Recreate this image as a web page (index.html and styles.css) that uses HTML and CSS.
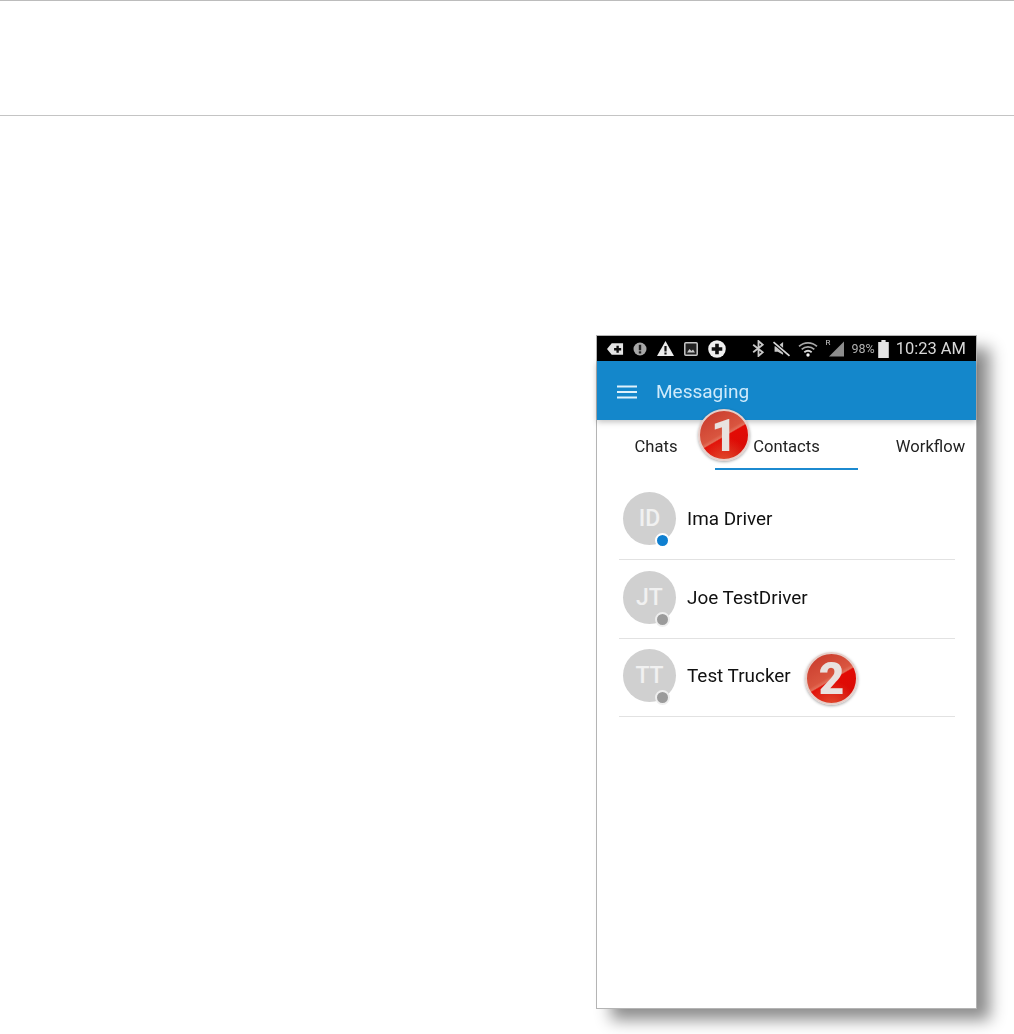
FILE: index.html
```html
<!DOCTYPE html>
<html lang="en">
<head>
<meta charset="utf-8">
<title>Messaging contacts</title>
<link rel="stylesheet" href="styles.css">
</head>
<body>
<header class="doc-header"></header>
<main class="doc-body">
  <section class="phone">
    <div class="status">
      <div class="status-left">
        <svg class="ic ic-first" width="17" height="14" viewBox="0 0 18 14"><path fill="#e4e4e4" d="M5 1h12v12H5L0 7z"/><path fill="#111" d="M10 3.500h2.500V6H15v2.500h-2.500V11H10V8.500H7.500V6H10z"/></svg>
        <svg class="ic" width="14" height="14" viewBox="0 0 14 14"><circle cx="7" cy="7" r="6.500" fill="#a8a8a8"/><rect x="5.800" y="2.800" width="2.400" height="5.500" fill="#222"/><rect x="5.800" y="9.300" width="2.400" height="2.200" fill="#222"/></svg>
        <svg class="ic" width="17" height="15" viewBox="0 0 17 15"><path fill="#ececec" d="M8.500 0L17 15H0z"/><rect x="7.400" y="5" width="2.200" height="5.500" fill="#111"/><rect x="7.400" y="11.500" width="2.200" height="2" fill="#111"/></svg>
        <svg class="ic" width="14" height="14" viewBox="0 0 14 14"><rect x=".8" y=".8" width="12.400" height="12.400" rx="1" fill="#222" stroke="#c8c8c8" stroke-width="1.500"/><path fill="#c8c8c8" d="M3 10.500l2.500-3.500 2 2 1.500-1.500 2 3z"/></svg>
        <svg class="ic" width="18" height="18" viewBox="0 0 17 17"><circle cx="8.500" cy="8.500" r="8.300" fill="#f0f0f0"/><path fill="#111" d="M6.800 3.500h3.400v3.300h3.300v3.400h-3.300v3.300H6.800v-3.300H3.500V6.800h3.300z"/></svg>
      </div>
      <div class="status-right">
        <svg class="ic" width="13" height="17" viewBox="0 0 12 16"><path fill="none" stroke="#c8c8c8" stroke-width="1.700" d="M1 4.500l9 7-4 3.500V1l4 3.500-9 7"/></svg>
        <svg class="ic" width="19" height="16" viewBox="0 0 17 15"><path fill="#c8c8c8" d="M2 5h3l5-4v12L5 10H2z"/><path stroke="#000" stroke-width="3.500" d="M1 1l15 13"/><path stroke="#d8d8d8" stroke-width="1.600" d="M1 1l15 13"/></svg>
        <svg class="ic" width="20" height="16" viewBox="0 0 19 15"><path fill="none" stroke="#a8a8a8" stroke-width="1.700" d="M1 5c5-4.500 12-4.500 17 0M3.500 7.800c3.500-3 8.500-3 12 0"/><path fill="none" stroke="#d4d4d4" stroke-width="1.800" d="M6 10.500c2-1.500 5-1.500 7 0"/><circle cx="9.500" cy="13.200" r="1.600" fill="#f4f4f4"/></svg>
        <span class="roam"><small class="roam-r">R</small><svg width="15" height="16" viewBox="0 0 15 15"><path fill="#8c8c8c" d="M15 0v15H0z"/></svg></span>
        <span class="pct">98%</span>
        <svg class="ic" width="11" height="18" viewBox="0 0 10 17"><path fill="#e4e4e4" d="M3 0h4v2h3v15H0V2h3z"/></svg>
        <span class="clock">10:23 AM</span>
      </div>
    </div>
    <div class="appbar">
      <svg class="menu" width="20" height="14" viewBox="0 0 20 14"><path stroke="#dff1fb" stroke-width="2.200" d="M0 1.500h20M0 7h20M0 12.500h20"/></svg>
      <span class="appbar-title">Messaging</span>
    </div>
    <nav class="tabs">
      <span class="tab tab-side">Chats</span>
      <span class="tab tab-active">Contacts</span>
      <span class="tab tab-side tab-far">Workflow</span>
    </nav>
    <ul class="contacts">
      <li class="contact">
        <span class="avatar">ID<i class="dot dot-on"></i></span>
        <span class="name">Ima Driver</span>
      </li>
      <li class="contact">
        <span class="avatar">JT<i class="dot"></i></span>
        <span class="name">Joe TestDriver</span>
      </li>
      <li class="contact">
        <span class="avatar">TT<i class="dot"></i></span>
        <span class="name">Test Trucker</span>
      </li>
    </ul>
    <span class="badge badge-one">1</span>
    <span class="badge badge-two">2</span>
  </section>
</main>
</body>
</html>
```
FILE: styles.css
```css
* { box-sizing: border-box; }
html, body { margin: 0; padding: 0; }
body { background: #fff; height: 1034px; overflow: hidden; font-family: Roboto, "Liberation Sans", sans-serif; }
.doc-header { height: 116px; border-top: 1px solid #bcbcbc; border-bottom: 1px solid #c4c4c4; }
.doc-body { display: flex; justify-content: flex-end; padding: 220px 38px 0 0; }
.phone {
  position: relative;
  width: 379px;
  height: 672px;
  background: #fff;
  outline: 1px solid #b4b4b4;
  box-shadow: 14px 12px 15px rgba(0, 0, 0, .45);
  display: flex;
  flex-direction: column;
}
.status {
  height: 25px;
  background: #000;
  display: flex;
  justify-content: space-between;
  align-items: center;
  padding: 0 10px 0 10px;
  filter: blur(.6px);
}
.status-left, .status-right { display: flex; align-items: center; }
.status-left { gap: 10px; }
.status-right { gap: 7px; }
.ic { display: block; }
.ic-first { margin-right: -1px; }
.roam { position: relative; display: block; width: 19px; height: 16px; }
.roam svg { position: absolute; right: 0; top: 0; }
.roam-r { position: absolute; left: 0; top: -3px; font-size: 8px; color: #ccc; }
.pct { font-size: 12.500px; color: #b0b0b0; margin-right: -4px; }
.clock { font-size: 16.500px; color: #d8d8d8; white-space: nowrap; }
.appbar {
  height: 59px;
  background: #1487cb;
  display: flex;
  align-items: center;
  padding-left: 20px;
  gap: 19px;
  box-shadow: 0 2px 6px rgba(0, 0, 0, .25);
  position: relative;
  z-index: 1;
}
.menu { display: block; margin-top: 2px; }
.appbar-title { font-size: 19px; color: #cfeafb; margin-top: 2px; filter: blur(.5px); }
.tabs { display: flex; height: 50px; }
.tab { display: flex; align-items: center; justify-content: center; font-size: 16.600px; color: #222; padding-top: 3px; filter: blur(.4px); }
.tab-side { width: 118px; }
.tab-far { padding-left: 27px; }
.tab-active { width: 143px; position: relative; }
.tab-active::after { content: ""; position: absolute; left: 0; right: 0; bottom: 0; height: 2px; background: #1c8ad0; }
.contacts { list-style: none; margin: 0; padding: 0 21px 0 22px; }
.contact {
  height: 78.500px;
  display: flex;
  align-items: center;
  gap: 11px;
  padding: 0 0 3px 4px;
  border-bottom: 1px solid #e2e2e2;
}
.contact:first-child { height: 90px; padding: 8px 0 0 4px; }
.avatar {
  position: relative;
  width: 53px;
  height: 53px;
  border-radius: 50%;
  background: #d0d0d0;
  color: #f1f1f1;
  font-size: 23px;
  font-weight: 500;
  display: flex;
  align-items: center;
  justify-content: center;
  flex: none;
}
.dot {
  position: absolute;
  right: 6.500px;
  bottom: -3px;
  width: 15px;
  height: 15px;
  border-radius: 50%;
  background: #9b9b9b;
  border: 2px solid #eee;
}
.dot-on { background: #0f7fd0; border-color: #fff; }
.name { font-size: 18.900px; color: #111; filter: blur(.4px); }
.badge {
  position: absolute;
  z-index: 2;
  width: 52px;
  height: 52px;
  border-radius: 50%;
  border: 2px solid #e6cfca;
  background:
    radial-gradient(circle at 50% 108%, rgba(226, 96, 60, .8) 0%, rgba(226, 96, 60, 0) 45%),
    linear-gradient(150deg, #c7382a 0%, #d9553f 46%, #e2705a 51%, #e20b05 53%, #d50c07 100%);
  box-shadow: 0 1px 3px rgba(0, 0, 0, .35);
  color: #e9e2df;
  font-family: Roboto, "Liberation Sans", sans-serif;
  font-weight: 900;
  font-size: 44px;
  padding-top: 1px;
  display: flex;
  align-items: center;
  justify-content: center;
  line-height: 1;
  filter: blur(.4px);
}
.badge-one { left: 101px; top: 73px; }
.badge-two { left: 208px; top: 316px; width: 53px; height: 53px; }
```
